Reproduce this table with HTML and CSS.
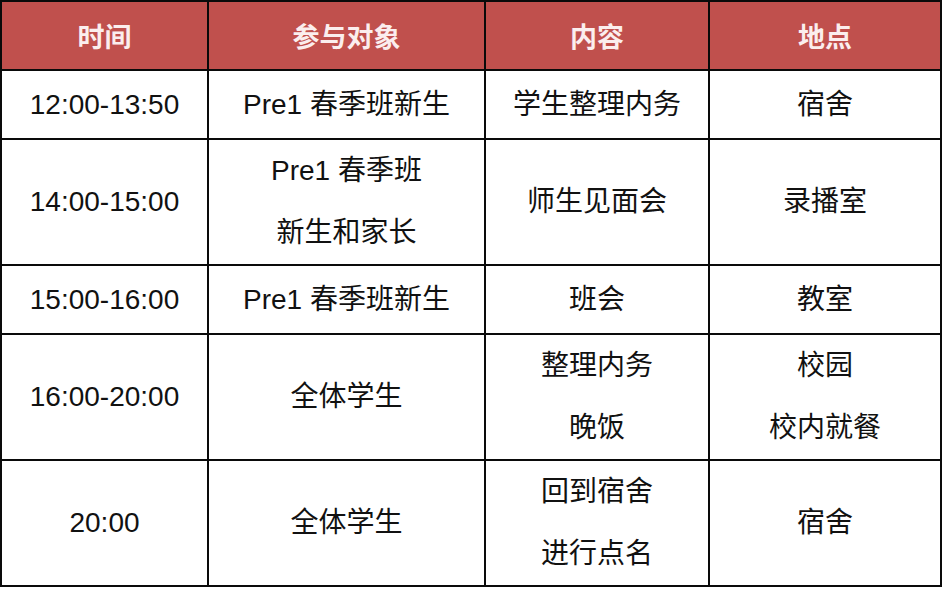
FILE: index.html
```html
<!DOCTYPE html>
<html lang="zh">
<head>
<meta charset="utf-8">
<link rel="stylesheet" href="styles.css">
</head>
<body>
<table class="schedule">
  <colgroup>
    <col class="c1"><col class="c2"><col class="c3"><col class="c4">
  </colgroup>
  <thead>
    <tr class="head">
      <th>时间</th><th>参与对象</th><th>内容</th><th>地点</th>
    </tr>
  </thead>
  <tbody>
    <tr class="single">
      <td>12:00-13:50</td><td>Pre1 春季班新生</td><td>学生整理内务</td><td>宿舍</td>
    </tr>
    <tr class="double">
      <td>14:00-15:00</td>
      <td><div class="ln">Pre1 春季班</div><div class="ln">新生和家长</div></td>
      <td>师生见面会</td><td>录播室</td>
    </tr>
    <tr class="single">
      <td>15:00-16:00</td><td>Pre1 春季班新生</td><td>班会</td><td>教室</td>
    </tr>
    <tr class="double">
      <td>16:00-20:00</td><td>全体学生</td>
      <td><div class="ln">整理内务</div><div class="ln">晚饭</div></td>
      <td><div class="ln">校园</div><div class="ln">校内就餐</div></td>
    </tr>
    <tr class="double">
      <td>20:00</td><td>全体学生</td>
      <td><div class="ln">回到宿舍</div><div class="ln">进行点名</div></td>
      <td>宿舍</td>
    </tr>
  </tbody>
</table>
</body>
</html>
```
FILE: styles.css
```css
html, body {
  margin: 0;
  padding: 0;
  background: #ffffff;
}
.schedule {
  border-collapse: collapse;
  table-layout: fixed;
  width: 940px;
  margin: 0;
  font-family: "Liberation Sans", "Noto Sans CJK SC", sans-serif;
  font-size: 28px;
  color: #111111;
}
.c1 { width: 207px; }
.c2 { width: 277px; }
.c3 { width: 224px; }
.c4 { width: 232px; }
.schedule th, .schedule td {
  border: 2px solid #0a0a0a;
  text-align: center;
  vertical-align: middle;
  padding: 0;
  line-height: 60px;
}
.head th {
  background: #c0504d;
  color: #fbeeee;
  font-family: "Noto Sans CJK SC", sans-serif;
  font-weight: 700;
  font-size: 27px;
  height: 67px;
}
.single td { height: 67px; }
.double td { height: 124px; }
.ln { line-height: 62px; }
```
